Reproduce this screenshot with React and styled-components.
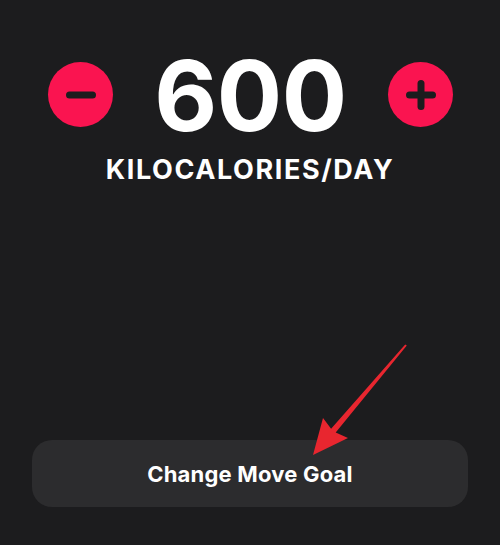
import React from "react";
import styled, { createGlobalStyle } from "styled-components";

const GlobalStyle = createGlobalStyle`
  html, body {
    margin: 0;
    padding: 0;
    background: #1c1c1e;
  }
  body {
    font-family: Inter, "Liberation Sans", sans-serif;
    color: #ffffff;
  }
`;

const Screen = styled.div`
  position: relative;
  width: 500px;
  height: 545px;
  display: flex;
  flex-direction: column;
  background: #1c1c1e;
  overflow: hidden;
`;

const GoalRow = styled.div`
  display: flex;
  align-items: center;
  justify-content: space-between;
  padding: 62px 47px 0 48px;
  height: 65px;
`;

const RoundButton = styled.button`
  width: 65px;
  height: 65px;
  border: none;
  border-radius: 50%;
  background: #fa1450;
  display: flex;
  align-items: center;
  justify-content: center;
  padding: 0;
  cursor: pointer;
`;

const GoalValue = styled.div`
  font-size: 97px;
  font-weight: 700;
  line-height: 1;
  letter-spacing: -0.5px;
  margin-top: 2px;
`;

const Unit = styled.div`
  margin-top: 26px;
  text-align: center;
  font-size: 27px;
  font-weight: 700;
  letter-spacing: 1.6px;
`;

const Footer = styled.div`
  margin-top: auto;
  padding: 0 32px 38px;
`;

const WideButton = styled.button`
  width: 100%;
  height: 67px;
  border: none;
  border-radius: 20px;
  background: #2c2c2e;
  color: #ffffff;
  font-family: Inter, "Liberation Sans", sans-serif;
  font-size: 22px;
  font-weight: 700;
  letter-spacing: 0.2px;
  cursor: pointer;
`;

const Annotation = styled.svg`
  position: absolute;
  left: 0;
  top: 0;
  pointer-events: none;
`;

function Minus() {
  return (
    <svg width="30" height="8" viewBox="0 0 30 8">
      <line x1="3.5" y1="4" x2="26.5" y2="4" stroke="#1c1c1e" strokeWidth="7" strokeLinecap="round" />
    </svg>
  );
}

function Plus() {
  return (
    <svg width="30" height="30" viewBox="0 0 30 30">
      <line x1="3.5" y1="15" x2="26.5" y2="15" stroke="#1c1c1e" strokeWidth="7" strokeLinecap="round" />
      <line x1="15" y1="3.5" x2="15" y2="26.5" stroke="#1c1c1e" strokeWidth="7" strokeLinecap="round" />
    </svg>
  );
}

export default function App() {
  return (
    <Screen>
      <GlobalStyle />
      <GoalRow>
        <RoundButton aria-label="Decrease">
          <Minus />
        </RoundButton>
        <GoalValue>600</GoalValue>
        <RoundButton aria-label="Increase">
          <Plus />
        </RoundButton>
      </GoalRow>
      <Unit>KILOCALORIES/DAY</Unit>
      <Footer>
        <WideButton>Change Move Goal</WideButton>
      </Footer>
      <Annotation width="500" height="545" viewBox="0 0 500 545">
        <polygon
          points="405.2,344.4 331.1,428.7 323,418 313,455 348,438 335.7,432.5 406.8,345.6"
          fill="#e8262f"
        />
      </Annotation>
    </Screen>
  );
}
